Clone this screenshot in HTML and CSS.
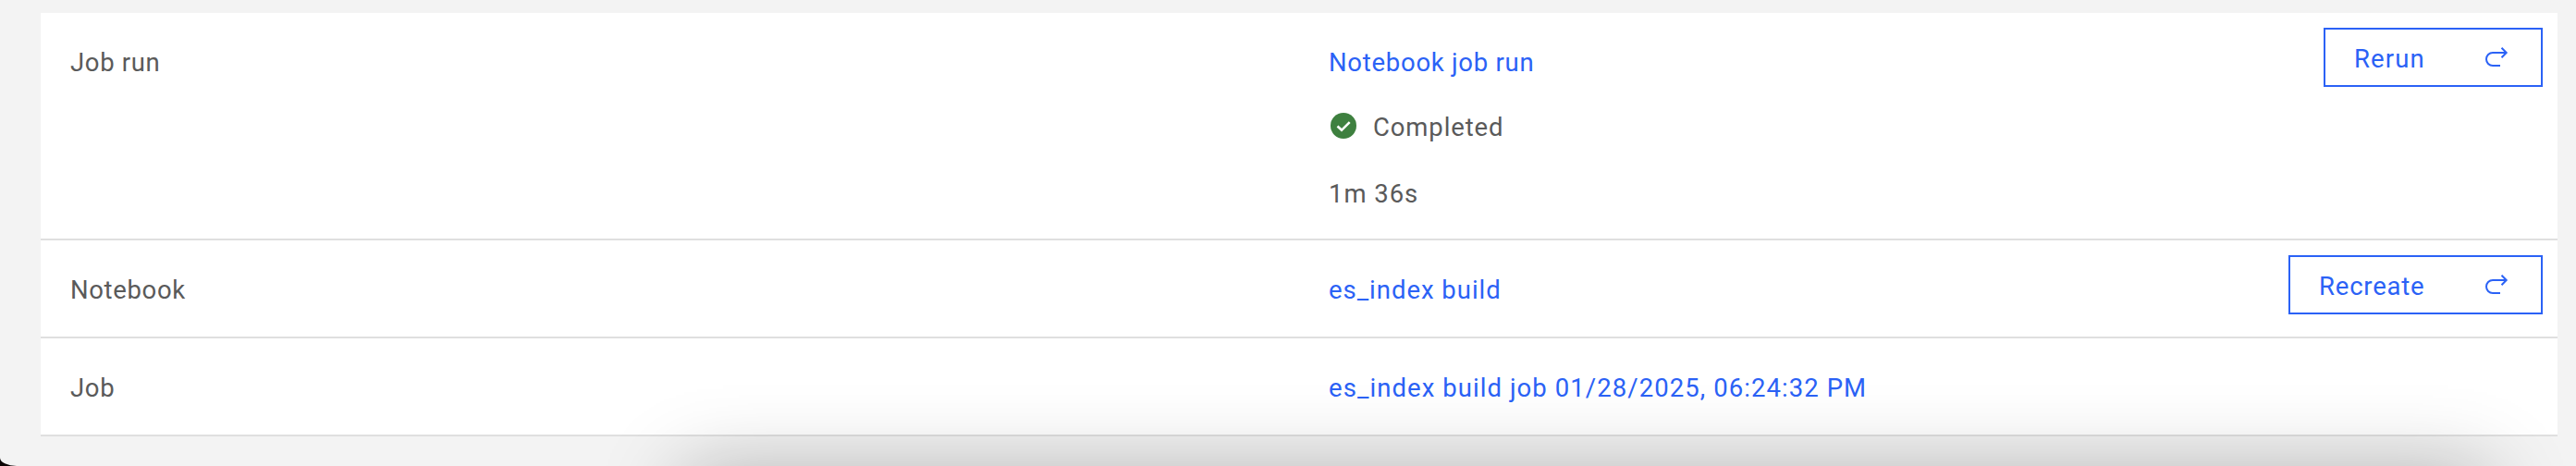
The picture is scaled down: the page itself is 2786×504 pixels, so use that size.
FILE: index.html
```html
<!DOCTYPE html>
<html lang="en">
<head>
<meta charset="utf-8">
<title>Job run</title>
<link rel="stylesheet" href="styles.css">
</head>
<body>
<div class="page">
  <main class="card">
    <section class="row row-run">
      <div class="label">Job run</div>
      <div class="details">
        <a class="link link-run">Notebook job run</a>
        <div class="status">
          <svg class="check" viewBox="0 0 28 28"><circle cx="14" cy="14" r="14"/><path d="M7.5 14.5l4.5 4.3 8.7-8.7"/></svg>
          <span>Completed</span>
        </div>
        <div class="duration">1m 36s</div>
      </div>
      <button class="action action-rerun"><span>Rerun</span>
        <svg class="redo" viewBox="0 0 26 24"><path d="M17 21H9A7 7 0 0 1 9 7h14.5M18.5 1.8L23.7 7l-5.2 5.2"/></svg>
      </button>
    </section>
    <section class="row">
      <div class="label">Notebook</div>
      <div class="details"><a class="link link-build">es_index build</a></div>
      <button class="action action-recreate"><span>Recreate</span>
        <svg class="redo" viewBox="0 0 26 24"><path d="M17 21H9A7 7 0 0 1 9 7h14.5M18.5 1.8L23.7 7l-5.2 5.2"/></svg>
      </button>
    </section>
    <section class="row">
      <div class="label">Job</div>
      <div class="details"><a class="link link-job">es_index build job 01/28/2025, 06:24:32 PM</a></div>
    </section>
  </main>
  <div class="overlay-shadow"></div>
</div>
</body>
</html>
```
FILE: styles.css
```css
* { box-sizing: border-box; }
body {
  margin: 0;
  background: #0c0606;
  font: 27.5px/36px Roboto, "Liberation Sans", sans-serif;
  color: #5a5a5a;
}
.page {
  position: relative;
  height: 504px;
  padding: 14px 20px 0 44px;
  overflow: hidden;
  background: #f3f3f3;
  border-bottom-left-radius: 18px 9px;
}
.card { background: #fff; }
.row {
  display: grid;
  grid-template-columns: 1361px 1fr auto;
  align-items: start;
  height: 106px;
  padding: 16px 16px 0 32px;
  border-bottom: 2px solid #dfdfdf;
}
.row-run { height: 246px; }
.label { padding-top: 20px; letter-spacing: .65px; }
.details { padding-top: 20px; }
.link { display: block; color: #2b62f6; }
.link-run { letter-spacing: .73px; }
.link-build { letter-spacing: .97px; }
.link-job { letter-spacing: 1.07px; }
.status {
  display: flex;
  align-items: center;
  gap: 18px;
  margin-top: 34px;
  padding-left: 2px;
  letter-spacing: .88px;
}
.check { width: 28px; height: 28px; margin-top: -4px; fill: #3e803f; }
.check path { fill: none; stroke: #fff; stroke-width: 2.6; }
.duration { margin-top: 36px; letter-spacing: .95px; }
.action {
  display: flex;
  justify-content: space-between;
  align-items: center;
  height: 64px;
  padding: 0 35px 0 31px;
  border: 2px solid #2b62f6;
  background: transparent;
  color: #2b62f6;
  font: inherit;
}
.action span { padding-top: 3px; }
.action-rerun { width: 237px; letter-spacing: 1.1px; }
.action-recreate { width: 275px; letter-spacing: .8px; }
.redo { width: 26px; height: 24px; fill: none; stroke: #2b62f6; stroke-width: 2; }
.overlay-shadow {
  position: absolute;
  left: 740px;
  top: 512px;
  width: 1950px;
  height: 600px;
  box-shadow: 0 0 84px rgba(0, 0, 0, .29);
}
```
